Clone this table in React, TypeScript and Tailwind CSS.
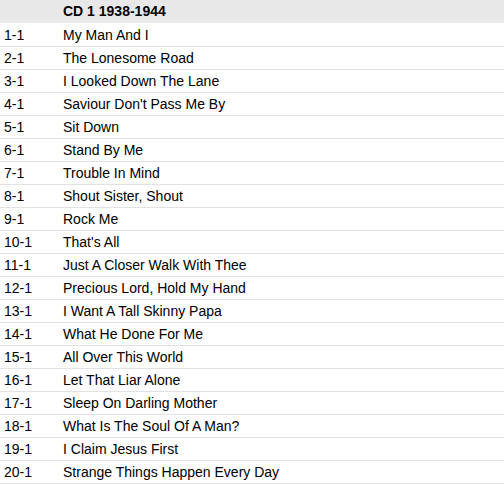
import React from 'react';

const TRACKS = [
  'My Man And I',
  'The Lonesome Road',
  'I Looked Down The Lane',
  "Saviour Don't Pass Me By",
  'Sit Down',
  'Stand By Me',
  'Trouble In Mind',
  'Shout Sister, Shout',
  'Rock Me',
  "That's All",
  'Just A Closer Walk With Thee',
  'Precious Lord, Hold My Hand',
  'I Want A Tall Skinny Papa',
  'What He Done For Me',
  'All Over This World',
  'Let That Liar Alone',
  'Sleep On Darling Mother',
  'What Is The Soul Of A Man?',
  'I Claim Jesus First',
  'Strange Things Happen Every Day',
];

const App: React.FC = () => {
  return (
    <div className="w-[504px] h-[484px] overflow-hidden bg-white text-black text-[14px] font-['Liberation_Sans',Arial,sans-serif]">
      {/* Disc header */}
      <div className="flex items-center h-[23px] bg-[#e8e8e8]">
        <div className="w-[63px] shrink-0" />
        <div className="font-bold">CD 1 1938-1944</div>
      </div>

      <div className="pt-px">
        {TRACKS.map((title, i) => (
          <div key={i} className="flex items-center h-[23px] pt-px border-b border-[#e2e2e2]">
            <div className="w-[63px] shrink-0 pl-[4px]">{i + 1}-1</div>
            <div>{title}</div>
          </div>
        ))}
      </div>
    </div>
  );
};

export default App;
